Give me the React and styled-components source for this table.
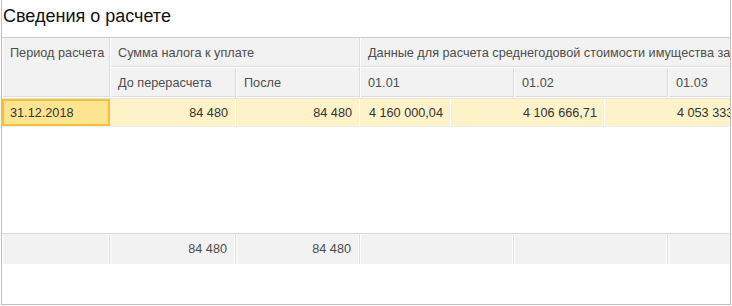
import React from 'react';
import styled, { createGlobalStyle } from 'styled-components';

const headCols = '108px 126px 124px 154px 154px 154px';
const rowCols = '108px 126px 124px 91px 154px 154px';

const App = () => {
    return (
        <Frame>
            <GlobalStyle />
            <Title>Сведения о расчете</Title>
            <Table>
                <Head>
                    <HeadCell span={2}>Период расчета</HeadCell>
                    <HeadCell cols="2 / 4">Сумма налога к уплате</HeadCell>
                    <HeadCell cols="4 / 7">Данные для расчета среднегодовой стоимости имущества за период</HeadCell>
                    <HeadCell>До перерасчета</HeadCell>
                    <HeadCell>После</HeadCell>
                    <HeadCell>01.01</HeadCell>
                    <HeadCell>01.02</HeadCell>
                    <HeadCell>01.03</HeadCell>
                </Head>
                <Row>
                    <Cell selected>31.12.2018</Cell>
                    <Cell right>84 480</Cell>
                    <Cell right>84 480</Cell>
                    <Cell right>4 160 000,04</Cell>
                    <Cell right>4 106 666,71</Cell>
                    <Cell right>4 053 333,38</Cell>
                </Row>
                <Empty />
                <Footer>
                    <FootCell></FootCell>
                    <FootCell>84 480</FootCell>
                    <FootCell>84 480</FootCell>
                    <FootCell></FootCell>
                    <FootCell></FootCell>
                    <FootCell></FootCell>
                </Footer>
            </Table>
        </Frame>
    )
}

export default App;

const GlobalStyle = createGlobalStyle`
    body {
        margin: 0;
        padding: 0;
        background: #fff;
        font-family: 'Liberation Sans', Arial, sans-serif;
    }
`

const Frame = styled.div`
    box-sizing: border-box;
    margin-left: 1px;
    width: 730px;
    height: 305px;
    border: 1px solid #bdbdbd;
    border-top: none;
    overflow: hidden;
    display: flex;
    flex-direction: column;
`

const Title = styled.div`
    height: 37px;
    flex-shrink: 0;
    padding-left: 1px;
    font-size: 18px;
    line-height: 32px;
    color: #111111;
    white-space: nowrap;
`

const Table = styled.div`
    display: flex;
    flex-direction: column;
    width: 820px;
    height: 226px;
    border-top: 1px solid #cccccc;
    border-left: 1px solid #c8c8c8;
    margin-left: -1px;
    font-size: 12.7px;
`

const Head = styled.div`
    display: grid;
    grid-template-columns: ${headCols};
    grid-template-rows: 30px 30px;
    background: #f2f2f2;
    border-bottom: 1px solid #e2e2e2;
`

const HeadCell = styled.div`
    box-sizing: border-box;
    grid-row: ${({span}) => span ? `span ${span}` : 'auto'};
    grid-column: ${({cols}) => cols || 'auto'};
    padding: 8px 8px 0 8px;
    color: #4d4d4d;
    white-space: nowrap;
    overflow: hidden;
    border-right: 1px solid #dddddd;
    border-bottom: 1px solid #ffffff;
    box-shadow: inset 1px 0 0 #ffffff, inset 0 -1px 0 #dedede;
`

const Row = styled.div`
    display: grid;
    grid-template-columns: ${rowCols};
    height: 27px;
    background: #fdf2c8;
    border-bottom: 1px solid #ececec;
`

const Cell = styled.div`
    box-sizing: border-box;
    display: flex;
    align-items: center;
    justify-content: ${({right}) => right ? 'flex-end' : 'flex-start'};
    padding: 0 8px 0 ${({selected}) => selected ? '6px' : '8px'};
    color: #333333;
    white-space: nowrap;
    background: ${({selected}) => selected ? '#fde491' : 'transparent'};
    border: ${({selected}) => selected ? '2px solid #f3c234' : 'none'};
    box-shadow: ${({selected}) => selected ? 'none' : 'inset -1px 0 0 #ffffff'};
`

const Empty = styled.div`
    flex: 1;
    background: #ffffff;
`

const Footer = styled.div`
    display: grid;
    grid-template-columns: ${headCols};
    height: 30px;
    background: #f2f2f2;
    border-top: 1px solid #dadada;
`

const FootCell = styled.div`
    box-sizing: border-box;
    display: flex;
    align-items: center;
    justify-content: flex-end;
    padding: 0 8px;
    color: #4d4d4d;
    border-right: 1px solid #dddddd;
    box-shadow: inset -1px 0 0 #ffffff, inset 1px 0 0 #ffffff;
`
